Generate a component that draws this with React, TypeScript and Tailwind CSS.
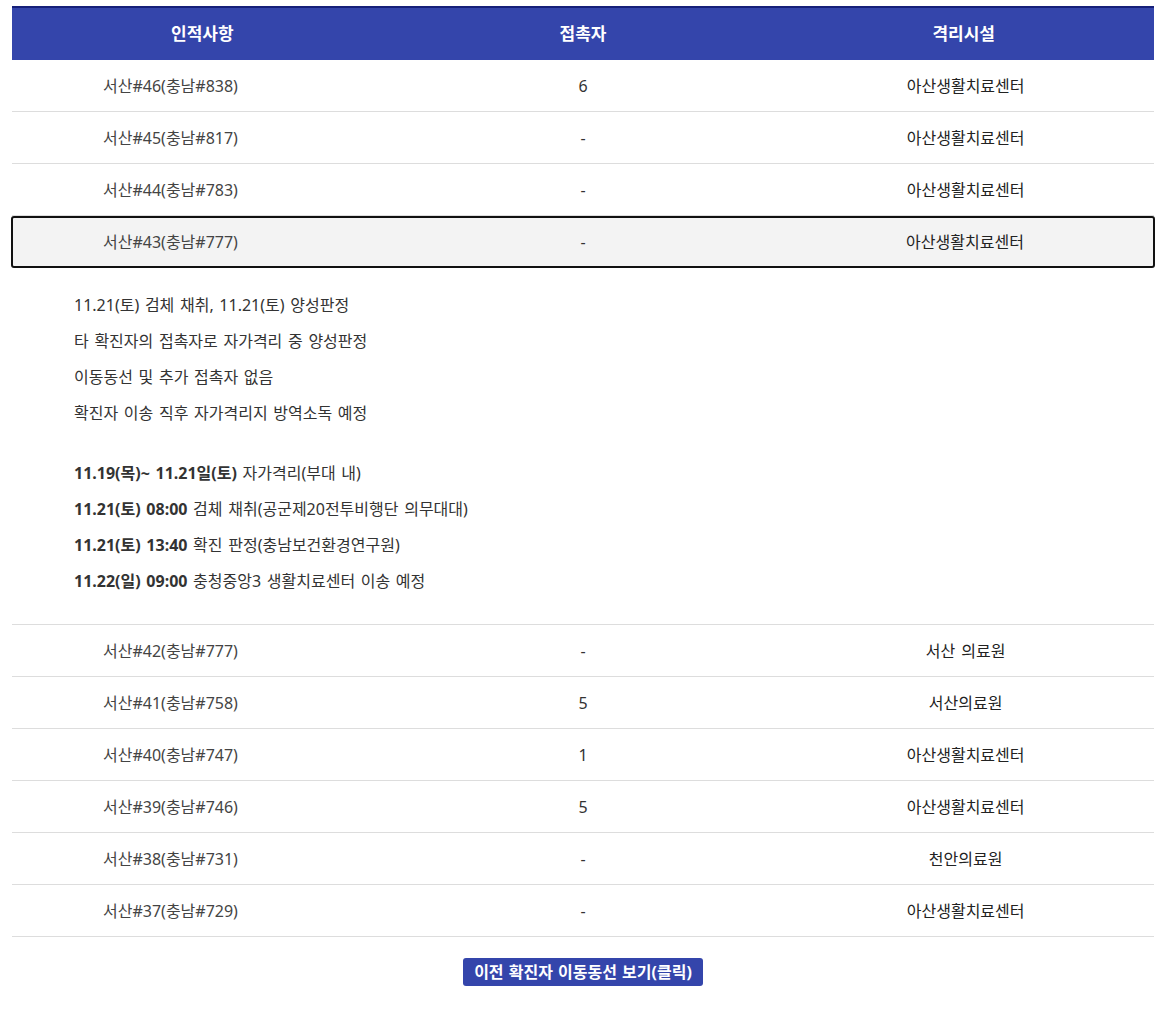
const font = { fontFamily: '"Noto Sans", "Noto Sans CJK KR", sans-serif' };

type Row = { name: string; contacts: string; facility: string };

const before: Row[] = [
  { name: "서산#46(충남#838)", contacts: "6", facility: "아산생활치료센터" },
  { name: "서산#45(충남#817)", contacts: "-", facility: "아산생활치료센터" },
  { name: "서산#44(충남#783)", contacts: "-", facility: "아산생활치료센터" },
];

const after: Row[] = [
  { name: "서산#42(충남#777)", contacts: "-", facility: "서산 의료원" },
  { name: "서산#41(충남#758)", contacts: "5", facility: "서산의료원" },
  { name: "서산#40(충남#747)", contacts: "1", facility: "아산생활치료센터" },
  { name: "서산#39(충남#746)", contacts: "5", facility: "아산생활치료센터" },
  { name: "서산#38(충남#731)", contacts: "-", facility: "천안의료원" },
  { name: "서산#37(충남#729)", contacts: "-", facility: "아산생활치료센터" },
];

function RowLine({ row, open }: { row: Row; open?: boolean }) {
  return (
    <div
      className={
        open
          ? "-mx-px grid h-[52px] grid-cols-3 items-center rounded-[3px] border-2 border-[#111] bg-[#f3f3f3] text-base"
          : "grid h-[52px] grid-cols-3 items-center border-b border-[#dddddd] text-base"
      }
    >
      <div className={open ? "pl-[90px] text-[#444]" : "pl-[91px] text-[#444]"}>{row.name}</div>
      <div className="text-center text-[#333]">{row.contacts}</div>
      <div className="pl-1 text-center text-[#222] [word-spacing:2px]">{row.facility}</div>
    </div>
  );
}

export default function App() {
  return (
    <div className="min-h-[1010px] bg-white px-3 pt-[6px]" style={font}>
      <div className="grid h-[54px] grid-cols-3 items-center border-t-2 border-[#16207a] bg-[#3445ab] text-[17px] font-bold text-white">
        <div className="text-center">인적사항</div>
        <div className="text-center">접촉자</div>
        <div className="text-center">격리시설</div>
      </div>

      {before.map((r) => (
        <RowLine key={r.name} row={r} />
      ))}
      <RowLine row={{ name: "서산#43(충남#777)", contacts: "-", facility: "아산생활치료센터" }} open />

      <div className="border-b border-[#dddddd] pt-[19px] pb-[25px] pl-[62px] text-base leading-[36px] text-[#333] [word-spacing:1.5px]">
        <p>11.21(토) 검체 채취, 11.21(토) 양성판정</p>
        <p>타 확진자의 접촉자로 자가격리 중 양성판정</p>
        <p>이동동선 및 추가 접촉자 없음</p>
        <p>확진자 이송 직후 자가격리지 방역소독 예정</p>
        <div className="h-6" />
        <p>
          <b>11.19(목)~ 11.21일(토)</b> 자가격리(부대 내)
        </p>
        <p>
          <b>11.21(토) 08:00</b> 검체 채취(공군제20전투비행단 의무대대)
        </p>
        <p>
          <b>11.21(토) 13:40</b> 확진 판정(충남보건환경연구원)
        </p>
        <p>
          <b>11.22(일) 09:00</b> 충청중앙3 생활치료센터 이송 예정
        </p>
      </div>

      {after.map((r) => (
        <RowLine key={r.name} row={r} />
      ))}

      <div className="flex justify-center pt-[21px]">
        <button
          className="h-[28px] rounded-[3px] bg-[#3445ab] px-[11px] text-base font-bold text-white [word-spacing:1px]"
          style={font}
        >
          이전 확진자 이동동선 보기(클릭)
        </button>
      </div>
    </div>
  );
}
